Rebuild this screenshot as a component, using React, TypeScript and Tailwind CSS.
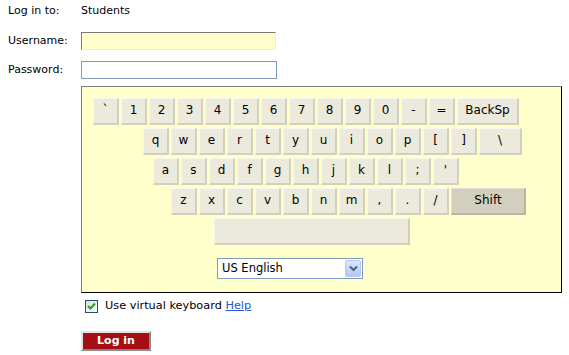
import React from "react";

const font = { fontFamily: '"DejaVu Sans", Verdana, sans-serif' };

type KeyProps = { label: string; w?: string; dark?: boolean };

function Key({ label, w = "w-[26px]", dark = false }: KeyProps) {
  const tone = dark
    ? "bg-[#d3cfbf] border-t-[#e2dfd2] border-l-[#e2dfd2] border-r-[#b9b4a0] border-b-[#b9b4a0]"
    : "bg-[#ebeadc] border-t-[#f6f5ee] border-l-[#f6f5ee] border-r-[#d2d0bc] border-b-[#d2d0bc]";
  return (
    <div
      className={`flex h-[27px] shrink-0 items-center justify-center border-t border-l border-r-2 border-b-2 pb-[2px] text-[12px] leading-none text-black ${w} ${tone}`}
    >
      {label}
    </div>
  );
}

const row1 = ["`", "1", "2", "3", "4", "5", "6", "7", "8", "9", "0", "-", "="];
const row2 = ["q", "w", "e", "r", "t", "y", "u", "i", "o", "p", "[", "]"];
const row3 = ["a", "s", "d", "f", "g", "h", "j", "k", "l", ";", "'"];
const row4 = ["z", "x", "c", "v", "b", "n", "m", ",", ".", "/"];

export default function App() {
  return (
    <div className="h-[355px] w-[569px] bg-white pl-[8px] pt-[4px] text-[11px] text-black" style={font}>
      <div className="flex h-[14px] items-center">
        <div className="w-[73px]">Log in to:</div>
        <div>Students</div>
      </div>
      <div className="mt-[14px] flex h-[18px] items-center">
        <div className="w-[73px]">Username:</div>
        <div className="h-[18px] w-[195px] border border-t-[#7a7a72] border-l-[#7a7a72] border-r-[#eeeed8] border-b-[#eeeed8] bg-[#ffffcc]" />
      </div>
      <div className="mt-[11px] flex h-[18px] items-center">
        <div className="w-[73px]">Password:</div>
        <div className="h-[18px] w-[196px] border border-[#7f9db9] bg-white" />
      </div>

      <div className="ml-[73px] mt-[7px] h-[207px] w-[481px] border border-t-[#808080] border-l-[#808080] border-r-black border-b-black bg-[#ffffcc] pt-[11px]">
        <div className="flex flex-col gap-[3px]">
          <div className="ml-[11px] flex gap-[2px]">
            {row1.map((k) => (
              <Key key={k} label={k} />
            ))}
            <Key label="BackSp" w="w-[62px]" />
          </div>
          <div className="ml-[61px] flex gap-[2px]">
            {row2.map((k) => (
              <Key key={k} label={k} />
            ))}
            <Key label="\" w="w-[43px]" />
          </div>
          <div className="ml-[71px] flex gap-[2px]">
            {row3.map((k) => (
              <Key key={k} label={k} />
            ))}
          </div>
          <div className="ml-[89px] flex gap-[2px]">
            {row4.map((k) => (
              <Key key={k} label={k} />
            ))}
            <Key label="Shift" w="w-[75px]" dark />
          </div>
          <div className="ml-[132px] flex">
            <Key label="" w="w-[196px]" />
          </div>
        </div>
        <div className="ml-[135px] mt-[13px] flex h-[21px] w-[146px] items-center border border-[#7f9db9] bg-white pl-[4px] pr-[1px] text-[11.5px]">
          <span className="flex-1">US English</span>
          <div className="flex h-[17px] w-[16px] items-center justify-center rounded-[2px] border border-[#b5c8f3] bg-gradient-to-b from-[#dce6fd] to-[#b3c7f6]">
            <svg width="9" height="7" viewBox="0 0 9 7">
              <path d="M1 1.5 L4.5 5 L8 1.5" fill="none" stroke="#4d6185" strokeWidth="2" />
            </svg>
          </div>
        </div>
      </div>

      <div className="ml-[77px] mt-[7px] flex h-[13px] items-center">
        <div className="flex h-[13px] w-[13px] items-center justify-center border border-[#1c5180] bg-gradient-to-br from-[#dcdcd7] to-white">
          <svg width="9" height="9" viewBox="0 0 9 9">
            <path d="M1 4 L3.5 6.5 L8 1.5" fill="none" stroke="#21a121" strokeWidth="2" />
          </svg>
        </div>
        <span className="ml-[7px] text-[11.3px]">
          Use virtual keyboard{" "}
          <span className="text-[#2557d6] underline">Help</span>
        </span>
      </div>

      <div className="ml-[73px] mt-[18px] flex h-[20px] w-[70px] items-center justify-center border-2 border-t-[#e3e3e3] border-l-[#e3e3e3] border-r-[#8a8a8a] border-b-[#8a8a8a] bg-[#a50f13] text-[11px] font-bold text-white">
        Log in
      </div>
    </div>
  );
}
